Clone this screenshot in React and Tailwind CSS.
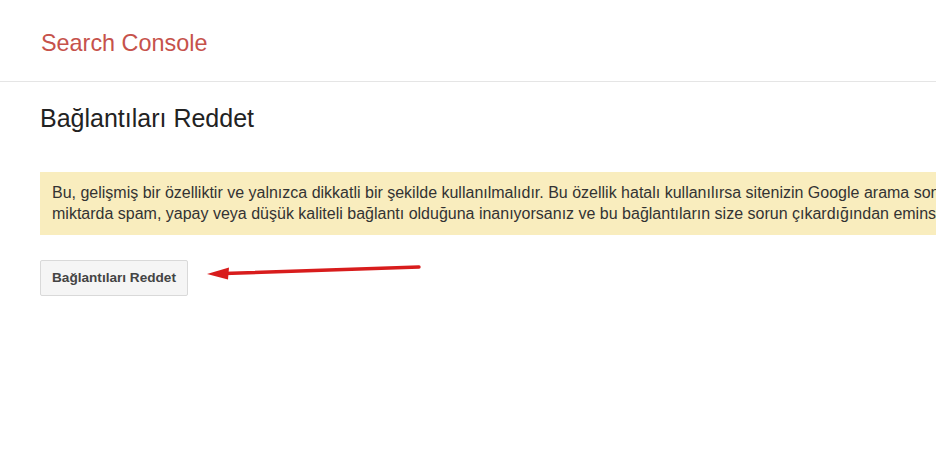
export default function App() {
  return (
    <div className="w-[936px] h-[468px] overflow-hidden bg-white font-['Liberation_Sans',Arial,sans-serif]">
      {/* header */}
      <header className="h-[82px] border-b border-[#e5e5e5] flex items-center pl-[41px]">
        <span className="text-[23.4px] text-[#c6524b] leading-none mt-[6px]">Search Console</span>
      </header>

      <main className="pl-[40px]">
        <h1 className="text-[25px] text-[#222] leading-none mt-[24px]">Bağlantıları Reddet</h1>

        {/* warning */}
        <div className="mt-[41px] w-[1300px] bg-[#f9edbe] px-[12px] pt-[10px] pb-[11px] text-[16px] leading-[21px] text-[#333]">
          <div className="whitespace-nowrap">
            Bu, gelişmiş bir özelliktir ve yalnızca dikkatli bir şekilde kullanılmalıdır. Bu özellik hatalı kullanılırsa sitenizin Google arama sonuçlarındaki performansı olumsuz etkilenebilir.
          </div>
          <div className="whitespace-nowrap">
            miktarda spam, yapay veya düşük kaliteli bağlantı olduğuna inanıyorsanız ve bu bağlantıların size sorun çıkardığından eminseniz bu araçtan yararlanabilirsiniz.
          </div>
        </div>

        <div className="mt-[25px] flex items-start">
          <button className="h-[36px] w-[148px] rounded-[2px] border border-[#d9d9d9] bg-[#f5f5f5] text-[13.6px] font-bold text-[#444]">
            Bağlantıları Reddet
          </button>
          {/* annotation arrow */}
          <svg width="222" height="20" viewBox="0 0 222 20" className="ml-[12px] mt-[2px]">
            <line x1="219" y1="5" x2="24" y2="11.5" stroke="#d81c1c" strokeWidth="3.4" strokeLinecap="round" />
            <polygon points="7,12 29,5.5 28,17.5" fill="#d81c1c" />
          </svg>
        </div>
      </main>
    </div>
  );
}
